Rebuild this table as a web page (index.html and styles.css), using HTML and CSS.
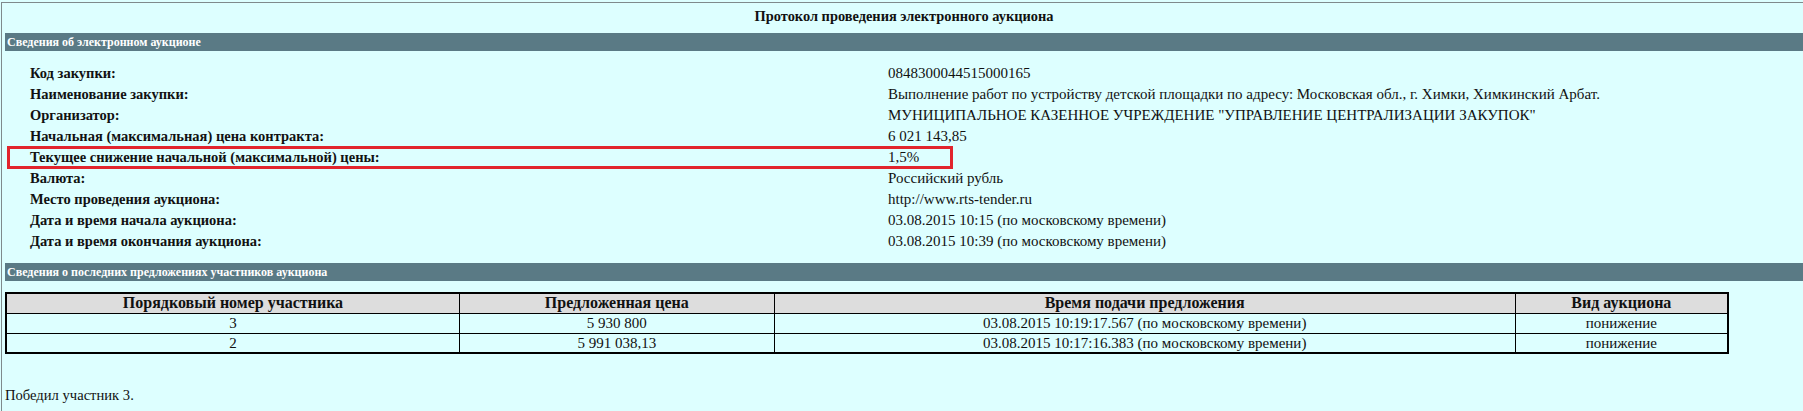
FILE: index.html
```html
<!DOCTYPE html>
<html>
	<head>
		<meta charset="UTF-8">
		<title>Протокол проведения электронного аукциона</title>
		<link rel="stylesheet" href="styles.css">
	</head>
	<body>
		<div class="page">
			<div class="title">Протокол проведения электронного аукциона</div>
			<div class="bar">Сведения об электронном аукционе</div>
			<div class="info">
				<div class="row"><b>Код закупки:</b><span>0848300044515000165</span></div>
				<div class="row"><b>Наименование закупки:</b><span>Выполнение работ по устройству детской площадки по адресу: Московская обл., г. Химки, Химкинский Арбат.</span></div>
				<div class="row"><b>Организатор:</b><span>МУНИЦИПАЛЬНОЕ КАЗЕННОЕ УЧРЕЖДЕНИЕ "УПРАВЛЕНИЕ ЦЕНТРАЛИЗАЦИИ ЗАКУПОК"</span></div>
				<div class="row"><b>Начальная (максимальная) цена контракта:</b><span>6 021 143,85</span></div>
				<div class="row mark"><i class="frame"></i><b>Текущее снижение начальной (максимальной) цены:</b><span>1,5%</span></div>
				<div class="row"><b>Валюта:</b><span>Российский рубль</span></div>
				<div class="row"><b>Место проведения аукциона:</b><span>http://www.rts-tender.ru</span></div>
				<div class="row"><b>Дата и время начала аукциона:</b><span>03.08.2015 10:15 (по московскому времени)</span></div>
				<div class="row"><b>Дата и время окончания аукциона:</b><span>03.08.2015 10:39 (по московскому времени)</span></div>
			</div>
			<div class="bar">Сведения о последних предложениях участников аукциона</div>
			<table class="offers">
				<tr>
					<th class="c1">Порядковый номер участника</th>
					<th class="c2">Предложенная цена</th>
					<th class="c3">Время подачи предложения</th>
					<th class="c4">Вид аукциона</th>
				</tr>
				<tr>
					<td>3</td>
					<td>5 930 800</td>
					<td>03.08.2015 10:19:17.567 (по московскому времени)</td>
					<td>понижение</td>
				</tr>
				<tr>
					<td>2</td>
					<td>5 991 038,13</td>
					<td>03.08.2015 10:17:16.383 (по московскому времени)</td>
					<td>понижение</td>
				</tr>
			</table>
			<p class="winner">Победил участник 3.</p>
		</div>
	</body>
</html>
```

FILE: styles.css
```css
*{
	padding: 0;
	margin: 0;
	box-sizing: border-box;
}
html,body{
	width: 100%;
	height: 100%;
	overflow: hidden;
	background-color: #ddffff;
}
body{
	font-family: "Liberation Serif", "Times New Roman", serif;
	font-size: 14.6px;
	color: #111;
	padding: 2px 0 0 1px;
}
.page{
	height: 100%;
	border-top: 1px solid #7f8a8c;
	border-left: 1px solid #7f8a8c;
	padding-left: 3px;
}
.title{
	height: 30px;
	line-height: 27px;
	text-align: center;
	font-weight: bold;
	font-size: 14.4px;
}
.bar{
	height: 18px;
	line-height: 18px;
	background-color: #5a7a85;
	color: #fff;
	font-weight: bold;
	font-size: 12px;
	padding-left: 2px;
}
.info{
	padding: 12px 0 11px 25px;
}
.row{
	display: grid;
	grid-template-columns: 858px auto;
	height: 21px;
	line-height: 21px;
}
.row b{
	font-size: 14.5px;
}
.row span{
	font-size: 15px;
}
.mark{
	position: relative;
}
.frame{
	position: absolute;
	left: -23px;
	top: -1px;
	width: 946px;
	height: 23px;
	border: 3px solid #e1252d;
}
.offers{
	margin-top: 11px;
	width: 1724px;
	border-collapse: collapse;
	border: 2px solid #000;
}
.offers th,.offers td{
	border: 1px solid #000;
	height: 20px;
	padding: 0 2px;
	text-align: center;
	font-size: 15px;
	line-height: 18px;
}
.offers th{
	background-color: #dddddd;
	font-size: 16px;
}
.c1{width: 454px;}
.c2{width: 315px;}
.c3{width: 742px;}
.c4{width: 213px;}
.winner{
	margin-top: 33px;
}
```
